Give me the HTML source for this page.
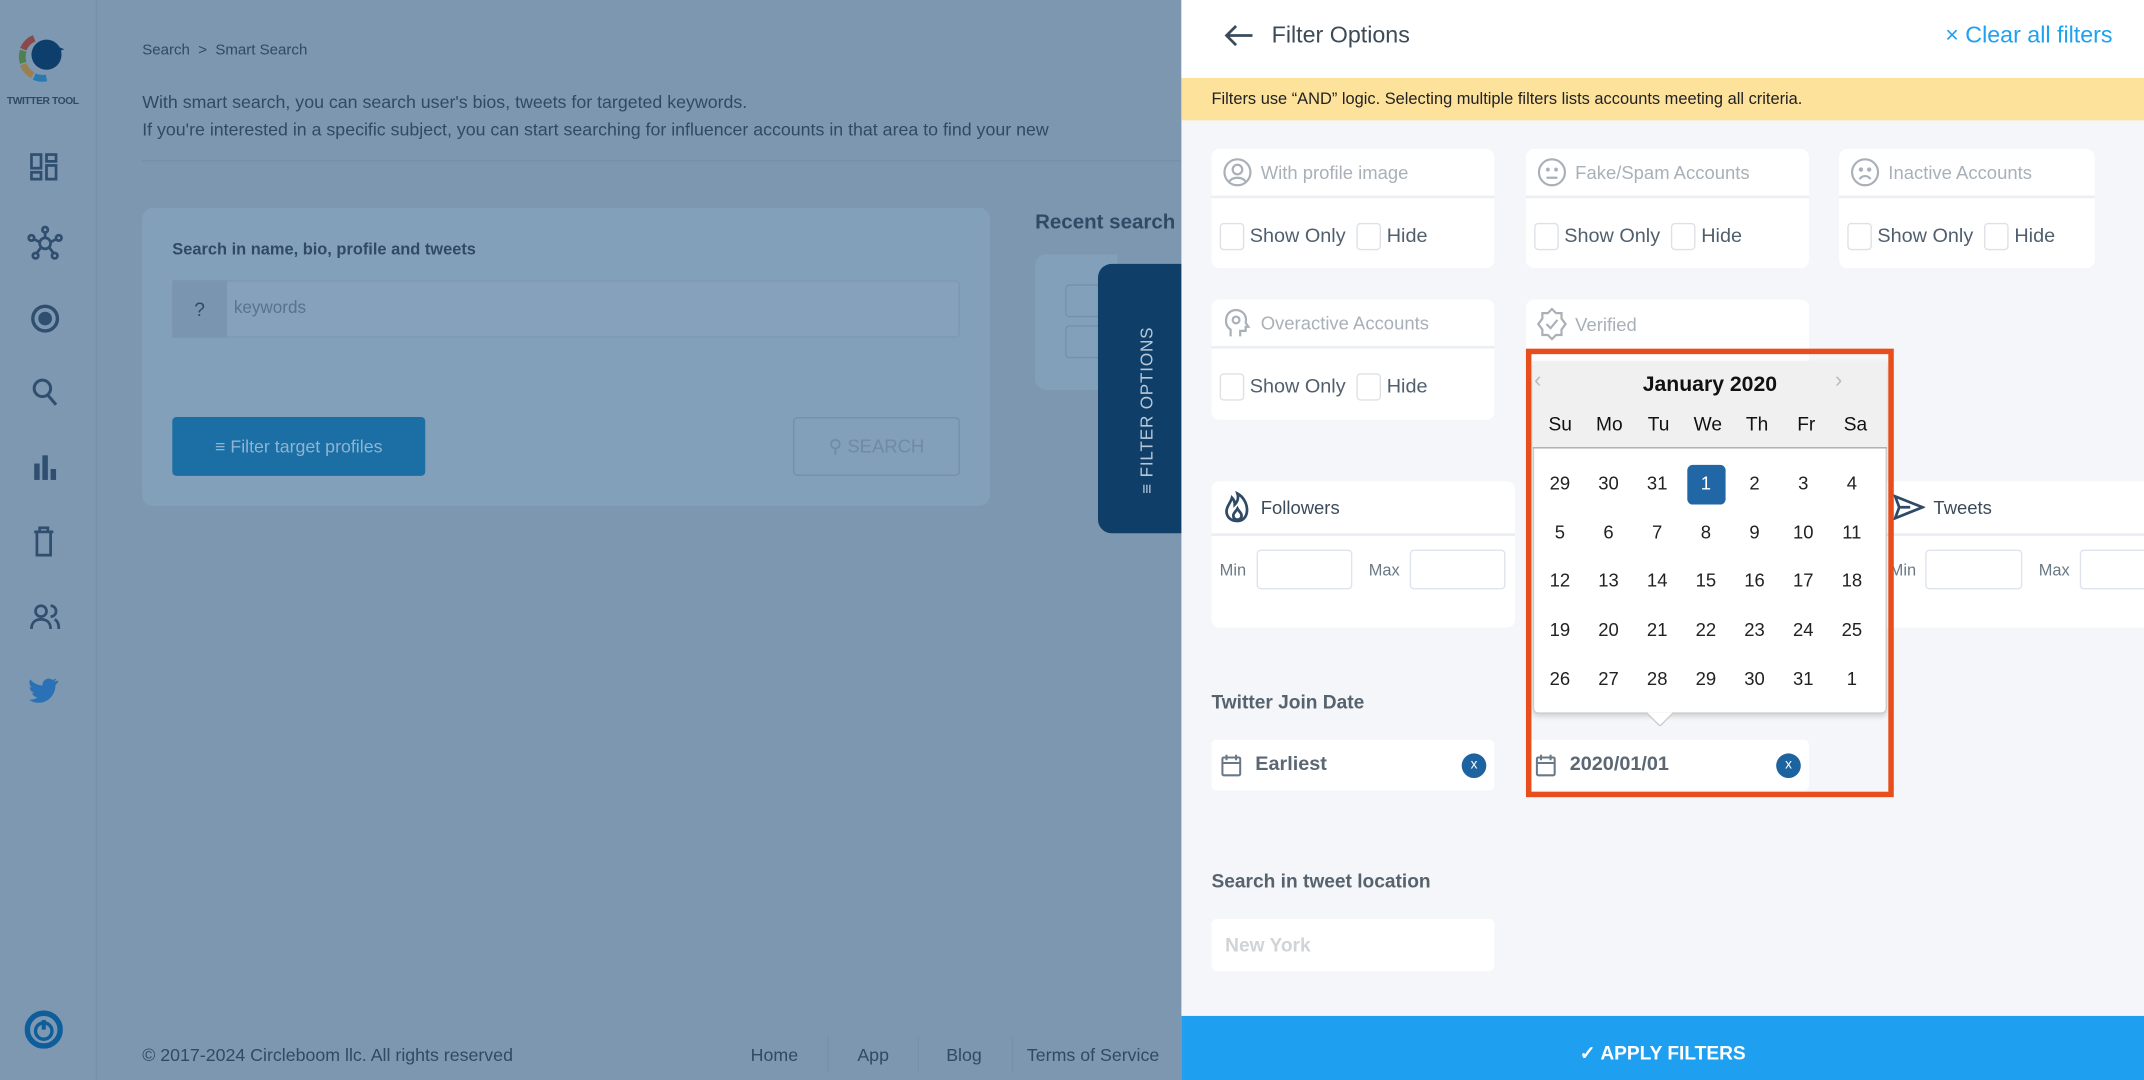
<!DOCTYPE html>
<html><head><meta charset="utf-8"><style>
*{box-sizing:border-box;margin:0;padding:0}
html,body{width:2144px;height:1080px;overflow:hidden;background:#7e97b0}
#w{position:absolute;left:0;top:0;width:1568px;height:790px;transform:scale(1.36735);transform-origin:0 0;font-family:"Liberation Sans",sans-serif;background:#7e97b0;overflow:hidden}
.a{position:absolute}
.t{color:#2f4a66}
.card{position:absolute;background:#fff;border-radius:6px}
.hd{position:absolute;left:0;right:0;top:0;height:36px;border-bottom:2px solid #eceef5;color:#a9b0b8;font-size:13.5px;display:flex;align-items:center;padding-left:8px;gap:6px}
.cb{position:absolute;top:54px;display:flex;align-items:center;color:#505f6e;font-size:14.5px}
.box{width:18px;height:20px;border:1px solid #dde1e6;border-radius:3px;margin-right:4px;background:#fff}
.ic{position:absolute;left:20px}
.cal td{width:35.6px;height:35.6px;text-align:center;font-size:13.5px;color:#222}
</style></head><body><div id="w">
<!-- left sidebar -->
<div class="a" style="left:0;top:0;width:71px;height:790px;border-right:1px solid #7590ab;background:#7f98b1"></div>
<svg class="a" style="left:12px;top:22px" width="40" height="38" viewBox="0 0 40 38"><path d="M13 6 A15 15 0 0 0 5 14" stroke="#8a4a4a" stroke-width="5" fill="none"/><path d="M5 15 A15 15 0 0 0 5 24" stroke="#4f8050" stroke-width="5" fill="none"/><path d="M5 25 A15 15 0 0 0 12 33" stroke="#9a8050" stroke-width="5" fill="none"/><path d="M13 34 A15 15 0 0 0 22 35" stroke="#2a7ab0" stroke-width="5" fill="none"/><circle cx="22" cy="18" r="11" fill="#0e3f6c"/><path d="M30 12 l5 2 -5 2z" fill="#0e3f6c"/></svg>
<div class="a t" style="left:5px;top:69px;font-size:7.5px;font-weight:bold;letter-spacing:-.3px">TWITTER TOOL</div>
<svg class="a" style="left:22px;top:112px" width="20" height="20" viewBox="0 0 20 20" fill="none" stroke="#2f4e70" stroke-width="2"><rect x="1" y="1" width="7" height="10"/><rect x="12" y="1" width="7" height="5"/><rect x="1" y="14" width="7" height="5"/><rect x="12" y="9" width="7" height="10"/></svg>
<svg class="a" style="left:20px;top:165px" width="26" height="26" viewBox="0 0 26 26" fill="none" stroke="#2f4e70" stroke-width="2"><circle cx="13" cy="13" r="4"/><circle cx="13" cy="3" r="2"/><circle cx="3" cy="9" r="2"/><circle cx="23" cy="9" r="2"/><circle cx="6" cy="22" r="2"/><circle cx="20" cy="22" r="2"/><path d="M13 5v4M5 10l4 2M21 10l-4 2M7 20l3-4M19 20l-3-4"/></svg>
<svg class="a" style="left:22px;top:222px" width="22" height="22" viewBox="0 0 22 22"><circle cx="11" cy="11" r="9" fill="none" stroke="#2f4e70" stroke-width="2.5"/><circle cx="11" cy="11" r="5" fill="#2f4e70"/></svg>
<svg class="a" style="left:23px;top:276px" width="20" height="22" viewBox="0 0 20 22" fill="none" stroke="#2f4e70" stroke-width="2.2"><circle cx="8" cy="8" r="6"/><path d="M12 13l6 7"/></svg>
<svg class="a" style="left:24px;top:331px" width="18" height="20" viewBox="0 0 18 20" fill="#2f4e70"><rect x="1" y="8" width="4" height="12"/><rect x="7" y="2" width="4" height="18"/><rect x="13" y="12" width="4" height="8"/></svg>
<svg class="a" style="left:24px;top:385px" width="16" height="22" viewBox="0 0 16 22" fill="none" stroke="#2f4e70" stroke-width="2"><path d="M1 4h14M5 4V1h6v3M3 4v17h10V4"/></svg>
<svg class="a" style="left:21px;top:441px" width="24" height="20" viewBox="0 0 24 20" fill="none" stroke="#2f4e70" stroke-width="2"><circle cx="9" cy="6" r="4"/><path d="M2 19c0-5 3-7 7-7s7 2 7 7M16 2a4 4 0 0 1 0 8M19 12c2 1 3 3 3 7"/></svg>
<svg class="a" style="left:21px;top:496px" width="22" height="18" viewBox="0 0 24 20"><path d="M23 2c-1 .5-2 .7-3 .8 1-.6 2-1.6 2-2.6-1 .6-2 1-3 1.2A5 5 0 0 0 11 6a14 14 0 0 1-10-5 5 5 0 0 0 1.5 6.6A5 5 0 0 1 .5 7a5 5 0 0 0 4 5 5 5 0 0 1-2 .1 5 5 0 0 0 4.5 3.4A10 10 0 0 1 0 17.5 14 14 0 0 0 7.5 20c9 0 14-7.5 14-14v-.6c1-.7 1.800-1.600 2.5-2.600z" fill="#2a72b5"/></svg>
<svg class="a" style="left:18px;top:739px" width="28" height="28" viewBox="0 0 28 28"><circle cx="14" cy="14" r="12" fill="none" stroke="#0f5e9c" stroke-width="4"/><path d="M14 7v7" stroke="#0f5e9c" stroke-width="3"/><circle cx="14" cy="15" r="6" fill="none" stroke="#0f5e9c" stroke-width="2.5"/></svg>
<!-- main -->
<div class="a t" style="left:104px;top:31px;font-size:11px">Search &nbsp;&gt;&nbsp; Smart Search</div>
<div class="a t" style="left:104px;top:65px;font-size:13px;line-height:20px;white-space:nowrap">With smart search, you can search user's bios, tweets for targeted keywords.<br>If you're interested in a specific subject, you can start searching for influencer accounts in that area to find your new</div>
<div class="a" style="left:104px;top:117px;width:760px;height:1px;background:#7590ab"></div>
<div class="a" style="left:104px;top:152px;width:620px;height:218px;background:#83a0ba;border-radius:8px"></div>
<div class="a t" style="left:126px;top:175px;font-size:12px;font-weight:bold">Search in name, bio, profile and tweets</div>
<div class="a" style="left:126px;top:205px;width:576px;height:42px;background:#86a1bb;border:1px solid #7d98b2;border-radius:3px"></div>
<div class="a" style="left:126px;top:205px;width:40px;height:42px;background:#7a95b0;color:#2f4a66;font-size:14px;text-align:center;line-height:42px">?</div>
<div class="a" style="left:171px;top:218px;font-size:12.5px;color:#5a738c">keywords</div>
<div class="a" style="left:126px;top:305px;width:185px;height:43px;background:#1b6fa4;border-radius:3px;color:#8fb4d1;font-size:13px;line-height:43px;text-align:center">&#8801; Filter target profiles</div>
<div class="a" style="left:580px;top:305px;width:122px;height:43px;border:1px solid #7490aa;border-radius:3px;color:#6f8aa5;font-size:13.5px;line-height:41px;text-align:center">&#9906; SEARCH</div>
<div class="a t" style="left:757px;top:154px;font-size:15px;font-weight:bold">Recent search</div>
<div class="a" style="left:757px;top:186px;width:60px;height:99px;background:#83a0ba;border-radius:8px 0 0 8px"></div>
<div class="a" style="left:779px;top:208px;width:30px;height:24px;border:1px solid #7490aa;border-radius:3px"></div>
<div class="a" style="left:779px;top:238px;width:30px;height:24px;border:1px solid #7490aa;border-radius:3px"></div>
<div class="a" style="left:803px;top:193px;width:62px;height:197px;background:#0f3f68;border-radius:10px 0 0 10px"></div>
<div class="a" style="left:839px;top:300px;transform:translate(-50%,-50%) rotate(-90deg);color:#b8c8d8;font-size:12.5px;white-space:nowrap;letter-spacing:.6px">&#8801; FILTER OPTIONS</div>
<div class="a t" style="left:104px;top:764px;font-size:13px;color:#2f4a66">© 2017-2024 Circleboom llc. All rights reserved</div>
<div class="a t" style="left:549px;top:764px;font-size:13px">Home</div>
<div class="a" style="left:605px;top:758px;width:1px;height:26px;background:#7590ab"></div>
<div class="a t" style="left:627px;top:764px;font-size:13px">App</div>
<div class="a" style="left:671px;top:758px;width:1px;height:26px;background:#7590ab"></div>
<div class="a t" style="left:692px;top:764px;font-size:13px">Blog</div>
<div class="a" style="left:740px;top:758px;width:1px;height:26px;background:#7590ab"></div>
<div class="a t" style="left:751px;top:764px;font-size:13px">Terms of Service</div>
<!-- right panel -->
<div class="a" style="left:864px;top:0;width:704px;height:790px;background:#f4f6f9"></div>
<div class="a" style="left:864px;top:0;width:704px;height:57px;background:#fff"></div>
<svg class="a" style="left:894px;top:17px" width="24" height="18" viewBox="0 0 24 18" fill="none" stroke="#3c4b5a" stroke-width="2"><path d="M22 9H3M10 2L3 9l7 7"/></svg>
<div class="a" style="left:930px;top:16px;font-size:17px;color:#3c4b5a">Filter Options</div>
<div class="a" style="right:23px;top:16px;font-size:17px;color:#1da1f2">× Clear all filters</div>
<div class="a" style="left:864px;top:57px;width:704px;height:31px;background:#fde29c;font-size:12px;color:#222;padding-left:22px;line-height:31px">Filters use “AND” logic. Selecting multiple filters lists accounts meeting all criteria.</div>
<!-- row1 -->
<div class="card" style="left:886px;top:109px;width:207px;height:87px"><div class="hd"><svg width="22" height="22" viewBox="0 0 22 22" fill="none" stroke="#a9b0b8" stroke-width="1.6"><circle cx="11" cy="11" r="9.5"/><circle cx="11" cy="9" r="3.5"/><path d="M5 18c2-4 10-4 12 0"/></svg>With profile image</div><div class="cb" style="left:6px"><span class="box"></span>Show Only&nbsp;&nbsp;<span class="box"></span>Hide</div></div>
<div class="card" style="left:1116px;top:109px;width:207px;height:87px"><div class="hd"><svg width="22" height="22" viewBox="0 0 22 22" fill="none" stroke="#a9b0b8" stroke-width="1.6"><circle cx="11" cy="11" r="9.5"/><path d="M7 8l2 2M9 8l-2 2M13 8l2 2M15 8l-2 2M7 15h8"/></svg>Fake/Spam Accounts</div><div class="cb" style="left:6px"><span class="box"></span>Show Only&nbsp;&nbsp;<span class="box"></span>Hide</div></div>
<div class="card" style="left:1345px;top:109px;width:187px;height:87px"><div class="hd"><svg width="22" height="22" viewBox="0 0 22 22" fill="none" stroke="#a9b0b8" stroke-width="1.6"><circle cx="11" cy="11" r="9.5"/><circle cx="8" cy="9" r=".8"/><circle cx="14" cy="9" r=".8"/><path d="M7 16c2-3 6-3 8 0"/></svg>Inactive Accounts</div><div class="cb" style="left:6px"><span class="box"></span>Show Only&nbsp;&nbsp;<span class="box"></span>Hide</div></div>
<!-- row2 -->
<div class="card" style="left:886px;top:219px;width:207px;height:88px"><div class="hd"><svg width="22" height="24" viewBox="0 0 22 24" fill="none" stroke="#a9b0b8" stroke-width="1.6"><path d="M6 22v-5c-3-2-4-5-3-9 1-4 5-6 9-5 4 1 6 5 5 9l2 3h-2v3h-4v4"/><circle cx="10" cy="10" r="2.5"/></svg>Overactive Accounts</div><div class="cb" style="left:6px"><span class="box"></span>Show Only&nbsp;&nbsp;<span class="box"></span>Hide</div></div>
<div class="card" style="left:1116px;top:219px;width:207px;height:60px"><div class="hd" style="border:0"><svg width="22" height="24" viewBox="0 0 22 24" fill="none" stroke="#a9b0b8" stroke-width="1.6"><path d="M11 1l3 3h4v4l3 4-3 4v4h-4l-3 3-3-3H4v-4l-3-4 3-4V4h4z"/><path d="M7 12l3 3 5-6"/></svg>Verified</div></div>
<!-- followers/tweets -->
<div class="card" style="left:886px;top:352px;width:222px;height:107px"><div class="hd" style="height:40px;color:#3c4b5a;font-size:13.5px"><svg width="22" height="24" viewBox="0 0 22 24" fill="none" stroke="#2f4a66" stroke-width="2"><path d="M11 22c-5 0-8-3-8-7 0-4 3-6 4-10 2 2 2 4 2 5 2-2 3-5 2-8 4 2 7 7 7 12 0 5-3 8-7 8z"/><path d="M11 21c-2 0-3-1-3-3s2-3 3-5c1 2 3 3 3 5s-1 3-3 3z"/></svg>Followers</div>
<div class="a" style="left:6px;top:58px;font-size:12px;color:#6a7885">Min</div><div class="a" style="left:33px;top:50px;width:70px;height:29px;border:1px solid #dfe2ef;border-radius:3px"></div>
<div class="a" style="left:115px;top:58px;font-size:12px;color:#6a7885">Max</div><div class="a" style="left:145px;top:50px;width:70px;height:29px;border:1px solid #dfe2ef;border-radius:3px"></div></div>
<div class="card" style="left:1360px;top:352px;width:220px;height:107px;border-radius:6px 0 0 6px"><div class="hd" style="height:40px;color:#3c4b5a;font-size:13.5px;padding-left:24px"><svg width="24" height="20" viewBox="0 0 24 20" fill="none" stroke="#2f4a66" stroke-width="2"><path d="M2 2l20 8-20 8 3-8z M5 10h8"/></svg>Tweets</div>
<div class="a" style="left:22px;top:58px;font-size:12px;color:#6a7885">Min</div><div class="a" style="left:48px;top:50px;width:71px;height:29px;border:1px solid #dfe2ef;border-radius:3px"></div>
<div class="a" style="left:131px;top:58px;font-size:12px;color:#6a7885">Max</div><div class="a" style="left:161px;top:50px;width:60px;height:29px;border:1px solid #dfe2ef;border-radius:3px"></div></div>
<!-- join date -->
<div class="a" style="left:886px;top:505px;font-size:14px;font-weight:bold;color:#56636f">Twitter Join Date</div>
<div class="card" style="left:886px;top:541px;width:207px;height:37px;border-radius:4px"><svg class="a" style="left:7px;top:10px" width="15" height="17" viewBox="0 0 15 17" fill="none" stroke="#6a7885" stroke-width="1.5"><rect x="1" y="3" width="13" height="13" rx="1"/><path d="M1 7h13M4 1v4M11 1v4"/></svg><div class="a" style="left:32px;top:10px;font-size:14.5px;font-weight:bold;color:#5b6772">Earliest</div><div class="a" style="left:183px;top:10px;width:18px;height:18px;border-radius:50%;background:#1d63a0;color:#fff;font-size:10px;text-align:center;line-height:18px">x</div></div>
<div class="card" style="left:1116px;top:541px;width:207px;height:37px;border-radius:4px"><svg class="a" style="left:7px;top:10px" width="15" height="17" viewBox="0 0 15 17" fill="none" stroke="#6a7885" stroke-width="1.5"><rect x="1" y="3" width="13" height="13" rx="1"/><path d="M1 7h13M4 1v4M11 1v4"/></svg><div class="a" style="left:32px;top:10px;font-size:14.5px;font-weight:bold;color:#5b6772">2020/01/01</div><div class="a" style="left:183px;top:10px;width:18px;height:18px;border-radius:50%;background:#1d63a0;color:#fff;font-size:10px;text-align:center;line-height:18px">x</div></div>
<!-- calendar -->
<div class="a" style="left:1121px;top:264px;width:259px;height:258px;background:#fff;border:1px solid #ccc;border-radius:0 0 4px 4px;box-shadow:0 2px 4px rgba(0,0,0,.15)"></div>
<div class="a" style="left:1121px;top:264px;width:259px;height:64px;background:#f0f0f0;border-bottom:1px solid #aaa"></div>
<div class="a" style="left:1122px;top:270px;font-size:16px;color:#bbb">&#8249;</div>
<div class="a" style="left:1342px;top:270px;font-size:16px;color:#bbb">&#8250;</div>
<div class="a" style="left:1121px;top:273px;width:259px;text-align:center;font-size:15.5px;font-weight:bold;color:#111">January 2020</div>
<div class="a" style="left:1123px;top:302px;width:252px;display:flex;font-size:14px;color:#111"><span style="flex:1;text-align:center">Su</span><span style="flex:1;text-align:center">Mo</span><span style="flex:1;text-align:center">Tu</span><span style="flex:1;text-align:center">We</span><span style="flex:1;text-align:center">Th</span><span style="flex:1;text-align:center">Fr</span><span style="flex:1;text-align:center">Sa</span></div>
<div class="a" style="left:1234px;top:340px;width:28px;height:29px;background:#2166a5;border-radius:4px"></div>
<table class="cal a" style="left:1123px;top:336px;border-collapse:collapse">
<tr><td>29</td><td>30</td><td>31</td><td style="color:#fff">1</td><td>2</td><td>3</td><td>4</td></tr>
<tr><td>5</td><td>6</td><td>7</td><td>8</td><td>9</td><td>10</td><td>11</td></tr>
<tr><td>12</td><td>13</td><td>14</td><td>15</td><td>16</td><td>17</td><td>18</td></tr>
<tr><td>19</td><td>20</td><td>21</td><td>22</td><td>23</td><td>24</td><td>25</td></tr>
<tr><td>26</td><td>27</td><td>28</td><td>29</td><td>30</td><td>31</td><td>1</td></tr></table>
<svg class="a" style="left:1204px;top:521px" width="20" height="10" viewBox="0 0 20 10"><path d="M0 0L10 10L20 0" fill="#fff" stroke="#ccc"/></svg>
<div class="a" style="left:1116px;top:255px;width:269px;height:328px;border:4px solid #e84e1b"></div>
<!-- location -->
<div class="a" style="left:886px;top:636px;font-size:14px;font-weight:bold;color:#56636f">Search in tweet location</div>
<div class="card" style="left:886px;top:672px;width:207px;height:38px;border-radius:4px"><div class="a" style="left:10px;top:11px;font-size:14px;color:#d0d4d8;font-weight:bold">New York</div></div>
<div class="a" style="left:864px;top:743px;width:704px;height:47px;background:#1e9ff0;color:#fff;font-size:14px;font-weight:bold;text-align:center;line-height:54px">&#10003; APPLY FILTERS</div>
</div></body></html>
